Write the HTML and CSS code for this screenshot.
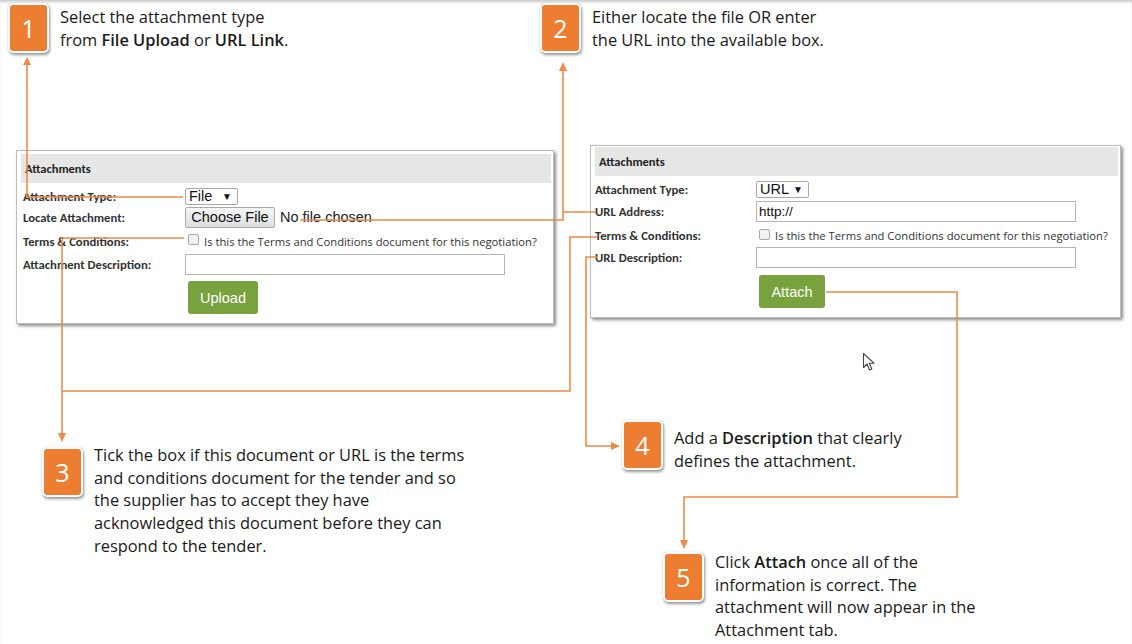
FILE: index.html
```html
<!DOCTYPE html>
<html lang="en">
<head>
  <meta charset="UTF-8" />
  <title>Adding Attachments</title>
  <link rel="stylesheet" href="styles.css">
</head>
<body>
<div class="slide">

  <!-- Step callouts -->
  <div class="callout c1">
    <div class="badge">1</div>
    <p class="note">Select the attachment type<br/>from <b>File Upload</b> or <b>URL Link</b>.</p>
  </div>
  <div class="callout c2">
    <div class="badge">2</div>
    <p class="note">Either locate the file OR enter<br/>the URL into the available box.</p>
  </div>
  <div class="callout c3">
    <div class="badge">3</div>
    <p class="note">Tick the box if this document or URL is the terms<br/>and conditions document for the tender and so<br/>the supplier has to accept they have<br/>acknowledged this document before they can<br/>respond to the tender.</p>
  </div>
  <div class="callout c4">
    <div class="badge">4</div>
    <p class="note">Add a <b>Description</b> that clearly<br/>defines the attachment.</p>
  </div>
  <div class="callout c5">
    <div class="badge">5</div>
    <p class="note">Click <b>Attach</b> once all of the<br/>information is correct. The<br/>attachment will now appear in the<br/>Attachment tab.</p>
  </div>

  <!-- File upload panel -->
  <div class="panel panel-file">
    <div class="panel-head">Attachments</div>
    <div class="form">
      <div class="label">Attachment Type:</div>
      <div class="field"><span class="select">File <span class="caret">&#9660;</span></span></div>
      <div class="label">Locate Attachment:</div>
      <div class="field"><span class="file-btn">Choose File</span><span class="no-file">No file chosen</span></div>
      <div class="label">Terms &amp; Conditions:</div>
      <div class="field"><span class="check"></span><span class="check-text">Is this the Terms and Conditions document for this negotiation?</span></div>
      <div class="label">Attachment Description:</div>
      <div class="field"><span class="input"></span></div>
      <div></div>
      <div class="field"><span class="green-btn upload">Upload</span></div>
    </div>
  </div>

  <!-- URL panel -->
  <div class="panel panel-url">
    <div class="panel-head">Attachments</div>
    <div class="form">
      <div class="label">Attachment Type:</div>
      <div class="field"><span class="select">URL <span class="caret">&#9660;</span></span></div>
      <div class="label">URL Address:</div>
      <div class="field"><span class="input">http://</span></div>
      <div class="label">Terms &amp; Conditions:</div>
      <div class="field"><span class="check"></span><span class="check-text">Is this the Terms and Conditions document for this negotiation?</span></div>
      <div class="label">URL Description:</div>
      <div class="field"><span class="input"></span></div>
      <div></div>
      <div class="field"><span class="green-btn attach">Attach</span></div>
    </div>
  </div>

  <!-- mouse pointer -->
  <svg class="pointer" width="14" height="20" viewBox="0 0 14 20">
    <path d="M1.5 1.5 L1.5 15.5 L5 12 L7.5 18 L9.8 17 L7.3 11.2 L12 11.2 Z" fill="#fff" stroke="#444" stroke-width="1.1" stroke-linejoin="round"/>
  </svg>

  <!-- connector lines -->
  <svg class="links" width="1132" height="644" viewBox="0 0 1132 644">
    <g fill="none" stroke="#ee8a45" stroke-width="1.6">
      <path d="M27 64 V197 H183"/>
      <path d="M563 70 V220 H300"/>
      <path d="M563 212 H596"/>
      <path d="M184 238 H62 V434"/>
      <path d="M62 391 H570 V237 H597"/>
      <path d="M597 257 H586 V446 H612"/>
      <path d="M826 292 H957 V497 H684 V541"/>
    </g>
    <g fill="#ee8a45">
      <polygon points="23,65 31,65 27,57"/>
      <polygon points="559,71 567,71 563,62"/>
      <polygon points="58,433 66,433 62,442"/>
      <polygon points="611,442 611,450 620,446"/>
      <polygon points="680,540 688,540 684,549"/>
    </g>
  </svg>

</div>
</body>
</html>
```

FILE: styles.css
```css
body {
  margin: 0;
  background: #fff;
  font-family: Carlito, Calibri, Lato, sans-serif;
  color: #1a1a1a;
}
.slide {
  position: relative;
  width: 1132px;
  height: 644px;
  overflow: hidden;
  background: #fff;
  box-shadow: inset 0 3px 3px -1px #c9c9c9;
}

/* callouts */
.callout {
  position: absolute;
  display: flex;
  align-items: flex-start;
  gap: 11px;
}
.c1 { left: 8px; top: 3px; }
.c2 { left: 540px; top: 3px; }
.c3 { left: 42px; top: 447px; }
.c4 { left: 622px; top: 420px; }
.c5 { left: 663px; top: 552px; }

.badge {
  flex: none;
  width: 37px;
  height: 46px;
  background: #ed7d31;
  border: 2px solid #fff;
  border-radius: 5px;
  box-shadow: 1px 2px 3px rgba(0,0,0,0.4), 0 0 1px rgba(0,0,0,0.3);
  color: #fff;
  font-family: "Open Sans", sans-serif;
  font-size: 25px;
  display: flex;
  align-items: center;
  justify-content: center;
}
.note {
  margin: 0;
  font-family: "Open Sans", sans-serif;
  font-size: 16.4px;
  line-height: 22.7px;
  color: #1a1a1a;
}
.note b { font-weight: 600; }
.c1 .note, .c2 .note { margin-top: 3px; }
.c3 .note { margin-top: -3px; }
.c4 .note { margin-top: 7px; }
.c5 .note { margin-top: -1px; }

/* screenshot panels */
.panel {
  position: absolute;
  box-sizing: border-box;
  background: #fff;
  border: 1px solid #bdbdbd;
  box-shadow: 2px 2px 3px rgba(0,0,0,0.45);
  padding: 3px 2px 9px 4px;
}
.panel-file { left: 16px; top: 150px; width: 538px; height: 174px; }
.panel-url { left: 590px; top: 145px; width: 531px; height: 173px; padding-top: 1px; }

.panel-head {
  height: 29px;
  background: #e6e6e6;
  font-size: 12.5px;
  font-weight: bold;
  color: #222;
  display: flex;
  align-items: center;
  padding-left: 4px;
}
.form {
  display: grid;
  grid-template-columns: 162px 1fr;
  grid-template-rows: 18px 24px 24px 22px auto;
  margin-top: 4px;
  padding-left: 2px;
}
.panel-url .form {
  grid-template-columns: 161px 1fr;
  grid-template-rows: 18px 26px 23px 21px auto;
  padding-left: 0;
}
.label {
  font-size: 12.7px;
  font-weight: bold;
  color: #333;
  display: flex;
  align-items: center;
}
.field {
  display: flex;
  align-items: center;
}
.select {
  box-sizing: border-box;
  width: 53px;
  height: 17px;
  border: 1px solid #a9a9a9;
  border-radius: 2px;
  font-family: "Liberation Sans", Arial, sans-serif;
  font-size: 14.5px;
  color: #111;
  padding: 0 5px 0 3px;
  display: flex;
  align-items: center;
  justify-content: space-between;
}
.caret { font-size: 10px; }
.file-btn {
  box-sizing: border-box;
  width: 90px;
  height: 21px;
  border: 1px solid #a9a9a9;
  border-radius: 2px;
  background: linear-gradient(#f6f6f6, #dedede);
  font-family: "Liberation Sans", Arial, sans-serif;
  font-size: 14.5px;
  color: #111;
  display: flex;
  align-items: center;
  justify-content: center;
}
.no-file {
  margin-left: 5px;
  font-family: "Liberation Sans", Arial, sans-serif;
  font-size: 14.5px;
  color: #222;
}
.check {
  box-sizing: border-box;
  width: 11px;
  height: 11px;
  margin-left: 3px;
  margin-top: -3px;
  border: 1px solid #a9a9a9;
  border-radius: 2px;
  background: #f2f2f2;
}
.check-text {
  margin-left: 5px;
  font-family: "Open Sans", sans-serif;
  font-size: 11.25px;
  color: #333;
}
.input {
  box-sizing: border-box;
  width: 320px;
  height: 21px;
  border: 1px solid #b5b5b5;
  font-family: "Liberation Sans", Arial, sans-serif;
  font-size: 13.5px;
  color: #111;
  padding-left: 2px;
  display: flex;
  align-items: center;
}
.green-btn {
  box-sizing: border-box;
  height: 33px;
  margin-top: 6px;
  margin-left: 3px;
  background: #78a23d;
  border-radius: 3px;
  color: #fff;
  font-family: "Liberation Sans", Arial, sans-serif;
  font-size: 14.5px;
  display: flex;
  align-items: center;
  justify-content: center;
}
.panel-url .green-btn { margin-top: 7px; }
.upload { width: 70px; }
.attach { width: 66px; }

/* overlays */
.pointer {
  position: absolute;
  left: 862px;
  top: 352px;
}
.links {
  position: absolute;
  left: 0;
  top: 0;
  pointer-events: none;
}
```
